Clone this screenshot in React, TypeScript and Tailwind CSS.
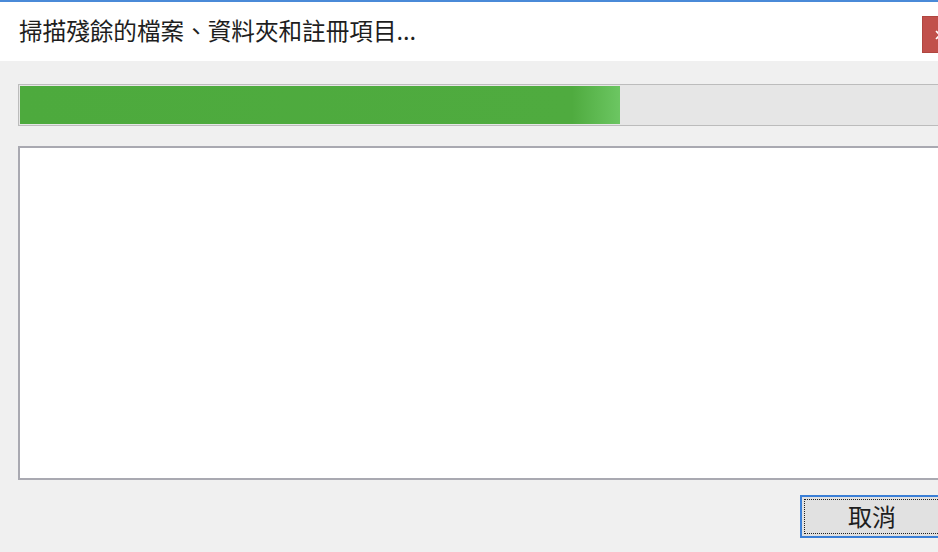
import React from "react";

export default function App() {
  const font = { fontFamily: '"Noto Sans CJK TC", "Noto Sans", sans-serif' };
  return (
    <div className="relative w-[938px] h-[552px] overflow-hidden bg-[#f0f0f0]" style={font}>
      <div className="w-[1000px] flex flex-col">
        <div className="h-[61px] bg-white border-t-2 border-[#4a8ad8] pl-[19px] pt-[15px]">
          <div className="text-[23.6px] leading-[26px] text-[#1e1e1e]">掃描殘餘的檔案、資料夾和註冊項目...</div>
        </div>
        <div className="pl-[18px] pt-[23px] flex flex-col">
          <div className="w-[980px] h-[42px] border border-[#bcbcbc] bg-[#e6e6e6] p-px">
            <div
              className="h-full w-[600px]"
              style={{ background: "linear-gradient(to right, #4daa3d 0%, #4fab3f 92%, #6cc662 100%)" }}
            />
          </div>
          <div className="mt-[20px] w-[980px] h-[334px] border-2 border-[#a9a9b1] bg-white" />
          <div className="mt-[15px] ml-[782px] w-[144px] h-[43px] border-2 border-[#3a7fd7] bg-[#e1e1e1] p-[2px]">
            <div className="w-full h-full border border-dotted border-[#202020] flex items-center justify-center text-[24px] leading-none text-[#1e1e1e] pb-[2px]">
              取消
            </div>
          </div>
        </div>
      </div>
      <div className="absolute left-[922px] top-[16px] w-[16px] h-[37px] bg-[#c1504b] border-y border-l border-[#b04640]">
        <svg className="absolute left-[12px] top-[13px]" width="10" height="10" viewBox="0 0 10 10">
          <path d="M1 1 L9 9 M9 1 L1 9" stroke="#ffffff" strokeWidth="1.6" />
        </svg>
      </div>
    </div>
  );
}
